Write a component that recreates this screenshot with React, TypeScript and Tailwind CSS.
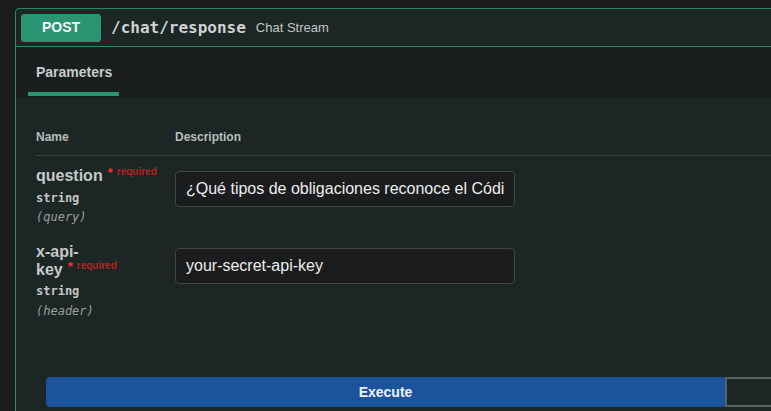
const sans = "font-['Liberation_Sans',Arial,sans-serif]";
const mono = "font-['DejaVu_Sans_Mono','Liberation_Mono',monospace]";

function Required() {
  return (
    <>
      <span className="relative -top-[4px] ml-[5px] text-[13px] font-bold text-[#ff2d2d]">*</span>
      <span className="relative -top-[6px] ml-[4px] text-[10px] font-bold text-[#b02424]">required</span>
    </>
  );
}

function ParamRow({
  name,
  type,
  where,
  value,
  nameMt,
  typeMt,
  whereMt,
  inputPt,
}: {
  name: React.ReactNode;
  type: string;
  where: string;
  value: string;
  nameMt: string;
  typeMt: string;
  whereMt: string;
  inputPt: string;
}) {
  return (
    <div className="flex py-[9px]">
      <div className="w-[139px] shrink-0">
        <div className={`${nameMt} text-[16px] font-bold leading-[18px] text-[#c6c9c9]`}>{name}</div>
        <div className={`${mono} ${typeMt} text-[12px] font-bold leading-[16px] text-[#c3c6c6]`}>{type}</div>
        <div className={`${mono} ${whereMt} text-[12px] italic leading-[16px] text-[#9c9f9f]`}>{where}</div>
      </div>
      <div className={inputPt}>
        <input
          readOnly
          value={value}
          className="block h-[36px] w-[340px] rounded-[4px] border border-[#414545] bg-[#1b1c1e] px-[10px] text-[16px] text-[#ececec] outline-none"
        />
      </div>
    </div>
  );
}

export default function App() {
  return (
    <div className={`${sans} h-[411px] overflow-hidden bg-[#1b1c1e] pl-[15px] pt-[8px]`}>
      <div className="w-[800px] rounded-l-[4px] border border-[#2b8a64] bg-[#1c2624]">
        <div className="flex h-[38px] items-center border-b border-[#2b8a64] pl-[5px]">
          <div className="flex h-[28px] w-[80px] items-center justify-center rounded-[3px] bg-[#2a9473] text-[14px] font-bold text-[#f4f4f4]">
            POST
          </div>
          <span className={`${mono} ml-[10px] text-[16px] font-bold text-[#d0d2d2]`}>/chat/response</span>
          <span className="ml-[10px] text-[13px] text-[#c2c6c6]">Chat Stream</span>
        </div>

        <div className="h-[50px] bg-[#1a1e1e] pl-[12px]">
          <div className="flex h-full w-[91px] flex-col justify-end">
            <div className="flex flex-1 items-center px-[8px] pt-[6px] text-[14px] font-bold text-[#c8cccc]">
              Parameters
            </div>
            <div className="mb-[1px] h-[4px] bg-[#2a9473]" />
          </div>
        </div>

        <div className="px-[20px] pt-[32px]">
          <div className="flex border-b border-[#3a403f] pb-[10px] text-[12px] font-bold leading-[16px] text-[#b9bdbd]">
            <div className="w-[139px]">Name</div>
            <div>Description</div>
          </div>
          <ParamRow
            name={
              <>
                question
                <Required />
              </>
            }
            type="string"
            where="(query)"
            nameMt="mt-[2px]"
            typeMt="mt-[3px]"
            whereMt="mt-[3px]"
            inputPt="pt-[6px]"
            value="¿Qué tipos de obligaciones reconoce el Código Civil?"
          />
          <ParamRow
            name={
              <>
                x-api-
                <br />
                key
                <Required />
              </>
            }
            type="string"
            where="(header)"
            nameMt="mt-0"
            typeMt="mt-[2px]"
            whereMt="mt-[4px]"
            inputPt="pt-[5px]"
            value="your-secret-api-key"
          />
        </div>

        <div className="flex pl-[30px] pt-[49px]">
          <button className="h-[30px] w-[679px] rounded-l-[4px] bg-[#1b549b] text-[14px] font-bold text-[#eef0f3]">
            Execute
          </button>
          <button className="h-[30px] w-[60px] border-2 border-[#5a5f5f] bg-transparent" />
        </div>
        <div className="h-[10px]" />
      </div>
    </div>
  );
}
